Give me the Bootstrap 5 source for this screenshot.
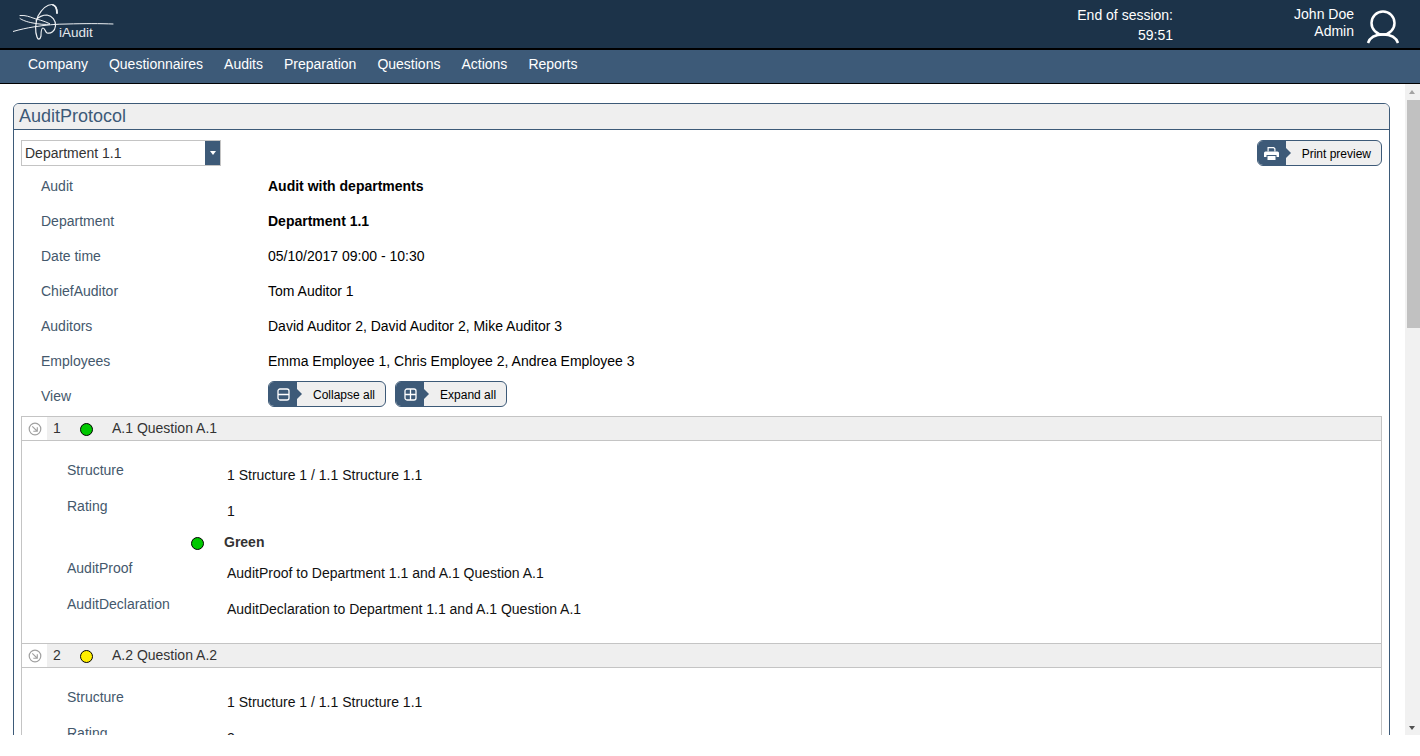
<!DOCTYPE html>
<html lang="en">
<head>
<meta charset="utf-8">
<title>iAudit</title>
<link href="https://cdn.jsdelivr.net/npm/bootstrap@5.3.0/dist/css/bootstrap.min.css" rel="stylesheet">
<style>
html,body{height:756px;overflow:hidden;background:#fff}
body{font-family:"Liberation Sans",Arial,sans-serif;font-size:14px;color:#000;line-height:normal}
.app-top{height:50px;background:#1c3349;border-bottom:2px solid #000;color:#fff;padding-left:13px}
.logo-box{position:relative;width:102px;height:44px}
.logo-name{position:absolute;left:46px;top:25px;font-size:13.500px;line-height:16px;color:#e4e8ec}
.session{width:200px;text-align:right;padding-top:5px;line-height:20px;margin-left:auto}
.who{width:181px;text-align:right;padding-top:6px;line-height:17px}
.who-icon{width:66px;padding:8px 0 0 12px}
.app-nav{height:34px;padding:0 0 0 17.500px;background:#3d5a78;border-bottom:1px solid #000;align-items:center;justify-content:flex-start}
.app-nav .navbar-nav{--bs-nav-link-padding-x:0}
.navbar-expand .navbar-nav .nav-link.top-link{color:#fff;padding:0 10.500px 6px;font-size:14px;line-height:16px}
.work{height:651px}
.scroller{flex:1 1 0;min-width:0;overflow:hidden;padding:19px 15px 0 13px}
.sbar{width:15px;background:#f1f1f1;position:relative}
.sb-thumb{position:absolute;left:2px;right:0;top:16px;height:228px;background:#c1c1c1}
.sb-up,.sb-down{position:absolute;left:4px;width:0;height:0;border-left:3.500px solid transparent;border-right:3.500px solid transparent}
.sb-up{top:6px;border-bottom:4px solid #a3a3a3}
.sb-down{bottom:5px;border-top:4px solid #505050}
.panel{border:1px solid #3d5a78;border-radius:6px;--bs-card-bg:#fff;height:800px}
.panel-head{height:26px;padding:0 0 0 5px;font-size:18px;line-height:24px;color:#3d5a78;background:#efefef;border-bottom:1px solid #3d5a78;border-radius:5px 5px 0 0!important}
.panel-body{padding:10px 7px 0}
.picker{width:200px;height:26px;border:1px solid #c4c4c4;padding-left:3px;line-height:25px;color:#333}
.picker-btn{width:15px;height:24px;background:#3d5a78;margin-left:auto;display:flex;align-items:center;justify-content:center}
.picker-btn i{width:0;height:0;border-left:3.500px solid transparent;border-right:3.500px solid transparent;border-top:4px solid #fff}
.act{--bs-btn-padding-x:0;--bs-btn-padding-y:0;--bs-btn-font-size:12px;--bs-btn-color:#000;--bs-btn-bg:#efefef;--bs-btn-border-color:#3d5a78;--bs-btn-hover-bg:#e2e2e2;--bs-btn-hover-border-color:#3d5a78;--bs-btn-hover-color:#000;--bs-btn-border-radius:6px;height:26px;display:inline-flex;align-items:stretch;line-height:26px;overflow:hidden;white-space:nowrap}
.act-ico{width:28px;background:#3d5a78;display:flex;align-items:center;justify-content:center;position:relative}
.act-ico::after{content:"";position:absolute;left:100%;top:7px;border-left:5px solid #3d5a78;border-top:5px solid transparent;border-bottom:5px solid transparent}
.act-txt{padding:0 10px 0 16px}
.info-row{height:35px;align-items:center;padding-left:20px}
.info-first{margin-top:2px}
.info-k{width:227px;color:#44586c;flex:none}
.info-row b{color:#000}
.view-row{height:32px;padding-left:20px;align-items:center}
.view-k{margin-top:4px}
.view-btns{gap:9px}
.qlist{border:1px solid #c4c4c4;border-bottom:0;margin-top:6px;width:1361px}
.q-head{height:24px;background:#efefef;border-bottom:1px solid #c4c4c4;color:#333;line-height:23px}
.q-tog{width:25px;background:#fff;display:flex;align-items:center;justify-content:center;height:23px}
.q-tog svg{margin-top:1px}
.q-no{width:33px;padding-left:6px}
.q-dot{width:13px;height:13px;border-radius:50%;border:1px solid #000;display:block;flex:none;margin-top:1px}
.dot-g{background:#00c800}
.dot-y{background:#ffee00}
.q-title{margin-left:19px}
.q-main{height:203px;padding-top:16px;border-bottom:1px solid #c4c4c4}
.q-last{border-bottom:0}
.q-row{height:36px;padding-left:45px}
.q-k{width:160px;flex:none;color:#44586c;padding-top:5px}
.q-v{padding-top:10px;color:#111}
.q-rate{height:26px;padding-left:169px;align-items:center;color:#333;font-weight:700}
.q-rate span:last-child{margin-left:20px}
.q-rate .q-dot{margin-top:3px}
</style>
</head>
<body class="d-flex flex-column">
<header class="app-top d-flex">
  <div class="logo-box">
    <svg width="102" height="44" viewBox="13 0 102 44" fill="none" stroke="#eef1f4" stroke-linecap="round">
      <path d="M13 31.500C20 29.500 27 28 33 27C45 25 57 24 67 24C85 23.500 100 23.500 113 24" stroke-width="1"/>
      <path d="M20 15.500C26 15 30 17 33 18C40 20 47 22 50 24C46 25 38 24 33 23C27 22 22 20 20 18.500" stroke-width="1"/>
      <path d="M57 13C57 8 55 4.500 52 4.500C47 4.500 42 9 38 16C35 23 35 32 37 37C38 40 40 40 41 36C41 32 41 28 43 28C45 28 45 32 47 33C51 34 55 31 55.500 26C56 20 52 16 47 15C43 15 38 17 36 20" stroke-width="1.200"/>
      <path d="M53 5C56 6 57 9 57 13" stroke-width="1.800"/>
    </svg>
    <span class="logo-name">iAudit</span>
  </div>
  <div class="session">End of session:<br>59:51</div>
  <div class="who">John Doe<br>Admin</div>
  <div class="who-icon">
    <svg width="34" height="36" viewBox="0 0 34 36" fill="none" stroke="#fff" stroke-width="2.500">
      <circle cx="17" cy="15" r="11.500"/>
      <path d="M2 35C4 29 10 26.500 17 26.500C24 26.500 30 29 32 35"/>
    </svg>
  </div>
</header>
<nav class="navbar navbar-expand app-nav">
  <ul class="navbar-nav">
    <li class="nav-item"><a class="nav-link top-link" href="#">Company</a></li>
    <li class="nav-item"><a class="nav-link top-link" href="#">Questionnaires</a></li>
    <li class="nav-item"><a class="nav-link top-link" href="#">Audits</a></li>
    <li class="nav-item"><a class="nav-link top-link" href="#">Preparation</a></li>
    <li class="nav-item"><a class="nav-link top-link" href="#">Questions</a></li>
    <li class="nav-item"><a class="nav-link top-link" href="#">Actions</a></li>
    <li class="nav-item"><a class="nav-link top-link" href="#">Reports</a></li>
  </ul>
</nav>
<div class="work d-flex">
  <main class="scroller">
    <section class="card panel">
      <div class="card-header panel-head">AuditProtocol</div>
      <div class="panel-body">
        <div class="d-flex justify-content-between">
          <div class="picker d-flex">Department 1.1<span class="picker-btn"><i></i></span></div>
          <button type="button" class="btn act">
            <span class="act-ico"><svg width="15" height="13" viewBox="0 0 15 13" fill="#fff"><path d="M3.500 0H10L11.500 1.500V4.500H10.300V2.200L9.500 1.200H4.700V4.500H3.500Z"/><path d="M1.500 4.500H13.500Q15 4.500 15 6V10H12.500V8H2.500V10H0V6Q0 4.500 1.500 4.500Z"/><path d="M3.500 9H11.500V13H3.500Z"/></svg></span>
            <span class="act-txt">Print preview</span>
          </button>
        </div>
        <div class="d-flex info-row info-first"><span class="info-k">Audit</span><b>Audit with departments</b></div>
        <div class="d-flex info-row"><span class="info-k">Department</span><b>Department 1.1</b></div>
        <div class="d-flex info-row"><span class="info-k">Date time</span><span>05/10/2017 09:00 - 10:30</span></div>
        <div class="d-flex info-row"><span class="info-k">ChiefAuditor</span><span>Tom Auditor 1</span></div>
        <div class="d-flex info-row"><span class="info-k">Auditors</span><span>David Auditor 2, David Auditor 2, Mike Auditor 3</span></div>
        <div class="d-flex info-row"><span class="info-k">Employees</span><span>Emma Employee 1, Chris Employee 2, Andrea Employee 3</span></div>
        <div class="d-flex view-row"><span class="info-k view-k">View</span>
          <div class="d-flex view-btns">
            <button type="button" class="btn act"><span class="act-ico"><svg width="13" height="13" viewBox="0 0 13 13" fill="none" stroke="#fff" stroke-width="1.300"><rect x="1" y="1" width="11" height="11" rx="2"/><path d="M1 6.500H12"/></svg></span><span class="act-txt">Collapse all</span></button>
            <button type="button" class="btn act"><span class="act-ico"><svg width="13" height="13" viewBox="0 0 13 13" fill="none" stroke="#fff" stroke-width="1.300"><rect x="1" y="1" width="11" height="11" rx="2"/><path d="M1 6.500H12M6.500 1V12"/></svg></span><span class="act-txt">Expand all</span></button>
          </div>
        </div>
        <div class="qlist">
          <div class="q-head d-flex align-items-center">
            <span class="q-tog"><svg width="14" height="14" viewBox="0 0 14 14" fill="none" stroke="#a0a0a0"><circle cx="7" cy="7" r="5.800" stroke-width="1.200"/><path d="M4.300 4.300L9 9M9.300 5.300V9.300H5.300" stroke-width="1.100"/></svg></span>
            <span class="q-no">1</span><span class="q-dot dot-g"></span><span class="q-title">A.1 Question A.1</span>
          </div>
          <div class="q-main">
            <div class="d-flex q-row"><span class="q-k">Structure</span><span class="q-v">1 Structure 1 / 1.1 Structure 1.1</span></div>
            <div class="d-flex q-row"><span class="q-k">Rating</span><span class="q-v">1</span></div>
            <div class="d-flex q-rate"><span class="q-dot dot-g"></span><span>Green</span></div>
            <div class="d-flex q-row"><span class="q-k">AuditProof</span><span class="q-v">AuditProof to Department 1.1 and A.1 Question A.1</span></div>
            <div class="d-flex q-row"><span class="q-k">AuditDeclaration</span><span class="q-v">AuditDeclaration to Department 1.1 and A.1 Question A.1</span></div>
          </div>
          <div class="q-head d-flex align-items-center">
            <span class="q-tog"><svg width="14" height="14" viewBox="0 0 14 14" fill="none" stroke="#a0a0a0"><circle cx="7" cy="7" r="5.800" stroke-width="1.200"/><path d="M4.300 4.300L9 9M9.300 5.300V9.300H5.300" stroke-width="1.100"/></svg></span>
            <span class="q-no">2</span><span class="q-dot dot-y"></span><span class="q-title">A.2 Question A.2</span>
          </div>
          <div class="q-main q-last">
            <div class="d-flex q-row"><span class="q-k">Structure</span><span class="q-v">1 Structure 1 / 1.1 Structure 1.1</span></div>
            <div class="d-flex q-row"><span class="q-k">Rating</span><span class="q-v">2</span></div>
          </div>
        </div>
      </div>
    </section>
  </main>
  <div class="sbar"><span class="sb-up"></span><span class="sb-thumb"></span><span class="sb-down"></span></div>
</div>
</body>
</html>
